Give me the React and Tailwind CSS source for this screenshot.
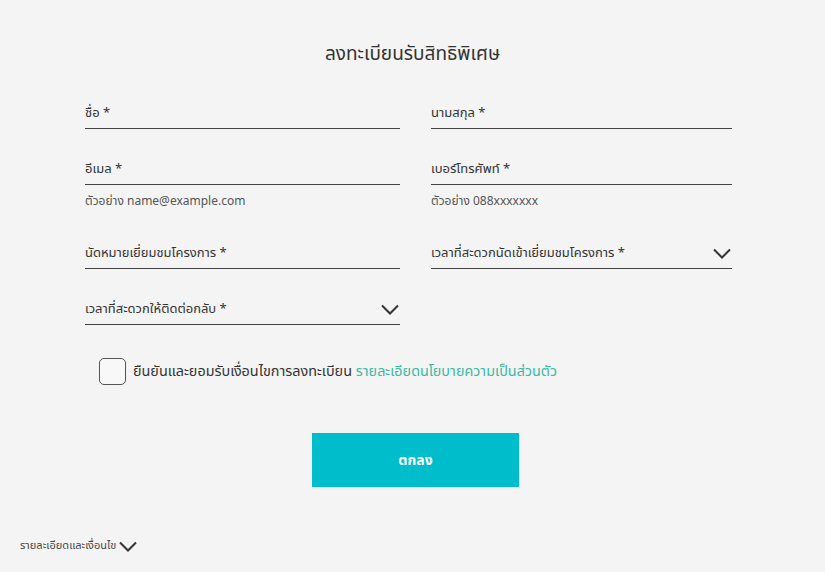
const font = { fontFamily: '"Noto Sans Thai", "Noto Sans", "DejaVu Sans", sans-serif' };

function Chevron({ className = '' }) {
  return (
    <svg className={className} width="18" height="11" viewBox="0 0 18 11" fill="none" stroke="#333" strokeWidth="2">
      <polyline points="1,1.5 9,9.5 17,1.5" />
    </svg>
  );
}

function Field({ label, select, helper }) {
  return (
    <div>
      <div className="flex items-center justify-between border-b border-[#444] pb-[5px] h-[26px]">
        <span className="text-[13px] leading-[20px] text-[#333]">{label}</span>
        {select && <Chevron className="mr-[1px]" />}
      </div>
      {helper && <p className="mt-[8px] text-[12px] leading-[16px] text-[#555]">{helper}</p>}
    </div>
  );
}

export default function App() {
  return (
    <div className="w-[825px] h-[572px] bg-[#f4f4f4] relative overflow-hidden" style={font}>
      <h1 className="pt-[42px] text-center text-[19px] leading-[26px] text-[#333] font-normal">ลงทะเบียนรับสิทธิพิเศษ</h1>

      <div className="ml-[85px] mt-[35px] grid grid-cols-[315px_301px] gap-x-[31px]">
        <Field label="ชื่อ *" />
        <Field label="นามสกุล *" />
        <div className="mt-[30px]"><Field label="อีเมล *" helper="ตัวอย่าง name@example.com" /></div>
        <div className="mt-[30px]"><Field label="เบอร์โทรศัพท์ *" helper="ตัวอย่าง 088xxxxxxx" /></div>
        <div className="mt-[34px]"><Field label="นัดหมายเยี่ยมชมโครงการ *" /></div>
        <div className="mt-[34px]"><Field label="เวลาที่สะดวกนัดเข้าเยี่ยมชมโครงการ *" select /></div>
        <div className="mt-[30px]"><Field label="เวลาที่สะดวกให้ติดต่อกลับ *" select /></div>
        <div />
      </div>

      <div className="ml-[99px] mt-[33px] flex items-center gap-[7px]">
        <div className="w-[27px] h-[27px] rounded-[5px] border-[1.5px] border-[#555] bg-white/40" />
        <span className="text-[14.4px] leading-[20px] text-[#333]">
          ยืนยันและยอมรับเงื่อนไขการลงทะเบียน{' '}
          <span className="text-[#3bb8a4]">รายละเอียดนโยบายความเป็นส่วนตัว</span>
        </span>
      </div>

      <div className="mt-[48px] flex justify-center">
        <button className="ml-[6px] w-[207px] h-[54px] bg-[#00bdcb] text-white text-[14px] font-bold">ตกลง</button>
      </div>

      <div className="absolute left-[20px] top-[537px] flex items-center gap-[3px]">
        <span className="text-[11px] leading-[18px] text-[#444]">รายละเอียดและเงื่อนไข</span>
        <Chevron />
      </div>
    </div>
  );
}
